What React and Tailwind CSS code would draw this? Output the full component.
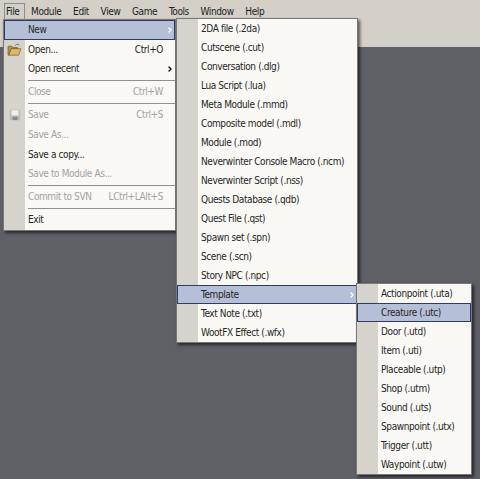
import { ChevronRight } from "lucide-react";

const MENUBAR = ["File", "Module", "Edit", "View", "Game", "Tools", "Window", "Help"];

const FILE_ITEMS = [
  { label: "New", arrow: true, active: true },
  { label: "Open...", shortcut: "Ctrl+O", icon: "open" },
  { label: "Open recent", arrow: true },
  { sep: true },
  { label: "Close", shortcut: "Ctrl+W", disabled: true },
  { sep: true },
  { label: "Save", shortcut: "Ctrl+S", disabled: true, icon: "save" },
  { label: "Save As...", disabled: true },
  { label: "Save a copy..." },
  { label: "Save to Module As...", disabled: true },
  { sep: true },
  { label: "Commit to SVN", shortcut: "LCtrl+LAlt+S", disabled: true },
  { sep: true },
  { label: "Exit" },
];

const NEW_ITEMS = [
  { label: "2DA file (.2da)" },
  { label: "Cutscene (.cut)" },
  { label: "Conversation (.dlg)" },
  { label: "Lua Script (.lua)" },
  { label: "Meta Module (.mmd)" },
  { label: "Composite model (.mdl)" },
  { label: "Module (.mod)" },
  { label: "Neverwinter Console Macro (.ncm)" },
  { label: "Neverwinter Script (.nss)" },
  { label: "Quests Database (.qdb)" },
  { label: "Quest File (.qst)" },
  { label: "Spawn set (.spn)" },
  { label: "Scene (.scn)" },
  { label: "Story NPC (.npc)" },
  { label: "Template", arrow: true, active: true },
  { label: "Text Note (.txt)" },
  { label: "WootFX Effect (.wfx)" },
];

const TEMPLATE_ITEMS = [
  { label: "Actionpoint (.uta)" },
  { label: "Creature (.utc)", active: true },
  { label: "Door (.utd)" },
  { label: "Item (.uti)" },
  { label: "Placeable (.utp)" },
  { label: "Shop (.utm)" },
  { label: "Sound (.uts)" },
  { label: "Spawnpoint (.utx)" },
  { label: "Trigger (.utt)" },
  { label: "Waypoint (.utw)" },
];

function OpenIcon() {
  return (
    <svg width="15" height="13" viewBox="0 0 18 16">
      <path d="M1 4h5l1 1.5h6V7H5L2 15H1z" fill="#b8923f" stroke="#6b5a30" strokeWidth="0.8" />
      <path d="M5 7h12l-3 8H2z" fill="#e0b864" stroke="#6b5a30" strokeWidth="0.8" />
      <path d="M10 3c2-2 4-2 5 0" fill="none" stroke="#555" strokeWidth="1" />
    </svg>
  );
}

function SaveIcon() {
  return (
    <svg width="12" height="12" viewBox="0 0 14 14">
      <rect x="1" y="1" width="12" height="12" fill="#bcbcb8" />
      <rect x="3" y="1.5" width="8" height="6" fill="#efefec" />
      <rect x="4" y="9" width="6" height="4" fill="#8a8a8a" />
    </svg>
  );
}

function Row({ item, tall }) {
  if (item.sep) {
    return (
      <div className="flex h-[3px] items-center pl-[24px]">
        <div className="h-px w-full bg-[#8f8f8d]" />
      </div>
    );
  }
  return (
    <div
      className={`relative flex items-center whitespace-nowrap pr-[12px] ${tall ? "h-[19.8px]" : "h-[19px]"} ${
        item.active ? "bg-[#b5bfd8] outline outline-1 -outline-offset-1 outline-[#2f3b63]" : ""
      } ${item.disabled ? "text-[#a3a39f]" : "text-[#262626]"}`}
    >
      <div className="flex h-full w-[21px] shrink-0 items-center justify-center">
        {item.icon === "open" && <OpenIcon />}
        {item.icon === "save" && <SaveIcon />}
      </div>
      <span className="ml-[3px]">{item.label}</span>
      {item.shortcut && <span className="ml-auto">{item.shortcut}</span>}
      {item.arrow && (
        <ChevronRight
          size={8}
          strokeWidth={4}
          className={`absolute right-[1px] ${item.active ? "text-white" : "text-black"}`}
        />
      )}
    </div>
  );
}

function Menu({ items, tall, className }) {
  return (
    <div
      className={`absolute border border-[#77777a] bg-[linear-gradient(to_right,#d6d3cc_21px,#f9f8f4_21px)] shadow-[2px_2px_3px_rgba(0,0,0,0.6)] ${className}`}
    >
      {items.map((item, i) => (
        <Row key={i} item={item} tall={tall} />
      ))}
    </div>
  );
}

export default function App() {
  return (
    <div className="relative h-[479px] w-[480px] overflow-hidden bg-[#5f5f66] font-['DejaVu_Sans_Condensed','DejaVu_Sans',sans-serif] text-[10px] leading-none tracking-[-0.4px]">
      <div className="h-[47px] bg-[#d4d0c8]">
        <div className="flex h-[22px] items-center gap-[11.7px] pl-[6px] pt-[1px] text-[#222]">
          {MENUBAR.map((m) => (
            <span key={m}>{m}</span>
          ))}
        </div>
      </div>

      <Menu items={FILE_ITEMS} tall className="left-[3px] top-[19px] w-[173px]" />
      <Menu items={NEW_ITEMS} className="left-[176px] top-[18px] w-[182px]" />
      <Menu items={TEMPLATE_ITEMS} className="left-[356px] top-[283px] w-[116px]" />

      {/* open File button outline sits over the bar */}
      <div className="absolute left-[4px] top-[3px] h-[17px] w-[21px] border border-b-0 border-[#8d8d8a]" />
    </div>
  );
}
